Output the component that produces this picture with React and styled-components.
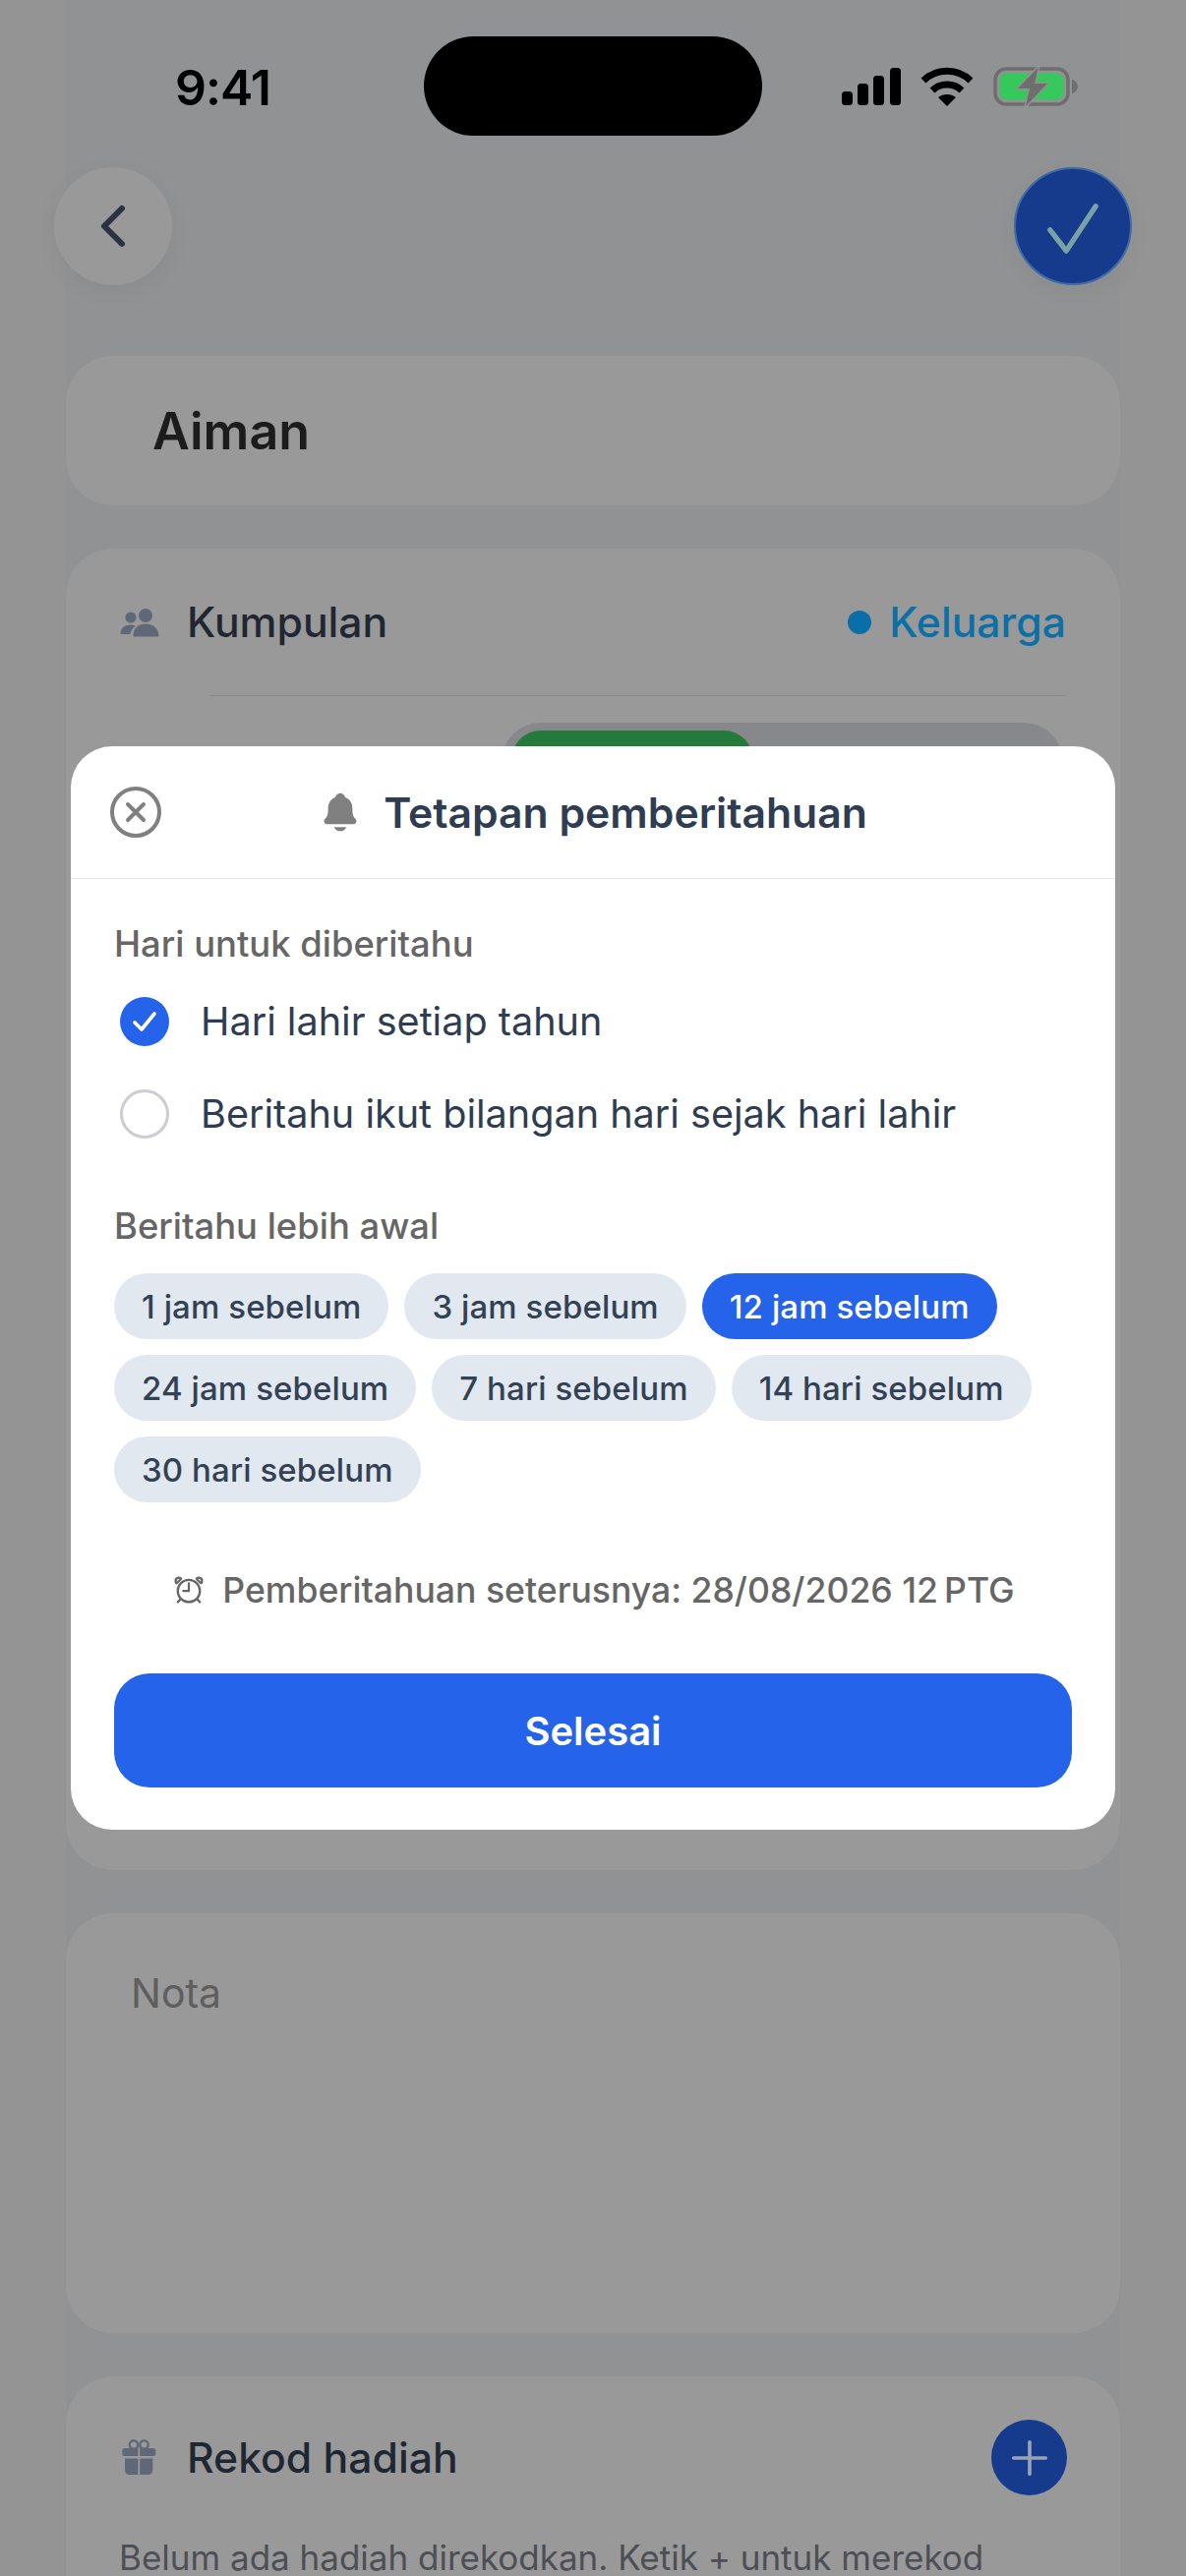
import styled, { createGlobalStyle } from "styled-components";
import {
  IoAdd,
  IoAlarmOutline,
  IoChevronBack,
  IoCloseCircleOutline,
  IoNotifications,
} from "react-icons/io5";

const CHIPS = [
  "1 jam sebelum",
  "3 jam sebelum",
  "12 jam sebelum",
  "24 jam sebelum",
  "7 hari sebelum",
  "14 hari sebelum",
  "30 hari sebelum",
];

const App = () => {
  return (
    <>
      <GlobalStyle />
      <Screen>
        <StatusBar>
          <Time>9:41</Time>
          <Island />
          <StatusIcons>
            <SignalIcon />
            <WifiIcon />
            <BatteryIcon />
          </StatusIcons>
        </StatusBar>

        <TopBar>
          <RoundButton>
            <IoChevronBack size={64} color="#2a3242" />
          </RoundButton>
          <RoundButton $primary>
            <svg width="120" height="120" viewBox="0 0 120 120" fill="none">
              <path
                d="M36 64 L53 86 L84 39"
                stroke="#79a1a6"
                strokeWidth="5.5"
                strokeLinecap="round"
                strokeLinejoin="round"
              />
            </svg>
          </RoundButton>
        </TopBar>

        <Column>
          <NameCard>
            <NameText>Aiman</NameText>
          </NameCard>

          <GroupCard>
            <Row>
              <RowLabel>
                <IconSlot>
                  <PeopleIcon />
                </IconSlot>
                <RowTitle>Kumpulan</RowTitle>
              </RowLabel>
              <GroupValue>
                <GroupDot />
                Keluarga
              </GroupValue>
            </Row>
            <Divider />
            <Segmented>
              <SegmentActive />
            </Segmented>
          </GroupCard>

          <NoteCard>
            <NotePlaceholder>Nota</NotePlaceholder>
          </NoteCard>

          <GiftCard>
            <GiftHeader>
              <RowLabel>
                <IconSlot>
                  <GiftIcon />
                </IconSlot>
                <RowTitle>Rekod hadiah</RowTitle>
              </RowLabel>
              <AddButton>
                <IoAdd size={58} color="#9aa3b5" />
              </AddButton>
            </GiftHeader>
            <GiftEmpty>Belum ada hadiah direkodkan. Ketik + untuk merekod</GiftEmpty>
          </GiftCard>
        </Column>

        <Modal>
          <ModalHeader>
            <CloseButton>
              <IoCloseCircleOutline size={64} color="#808080" />
            </CloseButton>
            <ModalTitle>
              <IoNotifications size={44} color="#808080" />
              <span>Tetapan pemberitahuan</span>
            </ModalTitle>
          </ModalHeader>

          <ModalBody>
            <SectionLabel>Hari untuk diberitahu</SectionLabel>
            <Options>
              <Option>
                <Radio $checked>
                  <svg width="28" height="24" viewBox="0 0 28 24" fill="none">
                    <path
                      d="M4 13 L11 20 L24 4"
                      stroke="#fff"
                      strokeWidth="3.6"
                      strokeLinecap="round"
                      strokeLinejoin="round"
                    />
                  </svg>
                </Radio>
                Hari lahir setiap tahun
              </Option>
              <Option>
                <Radio />
                Beritahu ikut bilangan hari sejak hari lahir
              </Option>
            </Options>

            <SectionLabel $spaced>Beritahu lebih awal</SectionLabel>
            <Chips>
              {CHIPS.map((chip) => (
                <Chip key={chip} $active={chip === "12 jam sebelum"}>
                  {chip}
                </Chip>
              ))}
            </Chips>

            <NextReminder>
              <IoAlarmOutline size={36} color="#666" />
              Pemberitahuan seterusnya: 28/08/2026 12{"\u202f"}PTG
            </NextReminder>

            <DoneButton>Selesai</DoneButton>
          </ModalBody>
        </Modal>
      </Screen>
    </>
  );
};

export default App;

const SignalIcon = () => (
  <svg width="60" height="38" viewBox="0 0 60 38" fill="#000">
    <rect x="0" y="24" width="11" height="14" rx="3.5" />
    <rect x="16" y="16" width="11" height="22" rx="3.5" />
    <rect x="32" y="8" width="11" height="30" rx="3.5" />
    <rect x="49" y="0" width="11" height="38" rx="3.5" />
  </svg>
);

const WifiIcon = () => (
  <svg width="54" height="40" viewBox="0 0 54 40" fill="none">
    <path d="M3 14 C16 1 38 1 51 14" stroke="#000" strokeWidth="7" />
    <path d="M12 24 C20 16 34 16 42 24" stroke="#000" strokeWidth="7" />
    <path d="M18 31 C23 27 31 27 36 31 L27 40 Z" fill="#000" />
  </svg>
);

const BatteryIcon = () => (
  <svg width="86" height="42" viewBox="0 0 86 42" fill="none">
    <rect x="2" y="3" width="74" height="36" rx="11" stroke="#6e6e6e" strokeWidth="3.5" />
    <rect x="6.5" y="7.5" width="65" height="27" rx="7" fill="#34c95a" />
    <path d="M80 14 C84 15 86 18 86 21 C86 24 84 27 80 28 Z" fill="#6e6e6e" />
    <path
      d="M46 1 L25 23 L37 23 L33 41 L55 18 L42 18 Z"
      fill="#6e6e6e"
      stroke="#929294"
      strokeWidth="3"
      strokeLinejoin="round"
      paintOrder="stroke"
    />
  </svg>
);

const PeopleIcon = () => (
  <svg width="40" height="32" viewBox="0 0 40 32" fill="#5f6878">
    <circle cx="26" cy="9" r="7" />
    <path d="M13.5 29 C13.5 22 19 17.5 26 17.5 C33 17.5 39 22 39.5 29 C39.5 30 39 30.5 38 30.5 L15 30.5 C14 30.5 13.5 30 13.5 29 Z" />
    <circle cx="11" cy="11" r="5.6" />
    <path d="M0.5 26.5 C1 21.5 5 18.5 10.5 18.5 C12.5 18.5 14.5 19 16 19.5 C13 21.5 11 24.5 10.5 28 L2 28 C1 28 0.5 27.5 0.5 26.5 Z" />
  </svg>
);

const GiftIcon = () => (
  <svg width="40" height="40" viewBox="0 0 40 40" fill="#5f6878">
    <circle cx="14" cy="6.5" r="4.2" fill="none" stroke="#5f6878" strokeWidth="2.4" />
    <circle cx="24.5" cy="6.5" r="4.2" fill="none" stroke="#5f6878" strokeWidth="2.4" />
    <path d="M5 10 H18.4 V18 H5 C3.4 18 2.3 16.9 2.3 15.4 V12.6 C2.3 11.1 3.4 10 5 10 Z" />
    <path d="M20.2 10 H33.6 C35.2 10 36.3 11.1 36.3 12.6 V15.4 C36.3 16.9 35.2 18 33.6 18 H20.2 Z" />
    <path d="M5 20.5 H18.4 V37 H10 C7 37 5 35 5 32 Z" />
    <path d="M20.2 20.5 H33.3 V32 C33.3 35 31.3 37 28.3 37 H20.2 Z" />
  </svg>
);

const GlobalStyle = createGlobalStyle`
  html, body {
    margin: 0;
    padding: 0;
    background: #949495;
    font-family: Inter, "Liberation Sans", sans-serif;
  }
  * {
    box-sizing: border-box;
  }
`;

const Screen = styled.div`
  position: relative;
  width: 1206px;
  height: 2620px;
  overflow: hidden;
  background: linear-gradient(
    to right,
    #949495 67px,
    #919293 67px,
    #919293 1139px,
    #949495 1139px
  );
`;

const StatusBar = styled.div`
  display: grid;
  grid-template-columns: 431px 344px 1fr;
  align-items: center;
  padding-top: 37px;
`;

const Time = styled.div`
  padding-left: 178px;
  padding-top: 2px;
  font-size: 50px;
  font-weight: 600;
  letter-spacing: -1px;
  color: #000;
`;

const Island = styled.div`
  height: 101px;
  border-radius: 51px;
  background: #000;
`;

const StatusIcons = styled.div`
  display: flex;
  align-items: center;
  gap: 20px;
  padding-left: 81px;
`;

const TopBar = styled.div`
  display: flex;
  justify-content: space-between;
  margin-top: 32px;
  padding: 0 55px;
`;

const RoundButton = styled.div`
  display: flex;
  align-items: center;
  justify-content: center;
  width: 120px;
  height: 120px;
  border-radius: 50%;
  background: ${(props) => (props.$primary ? "#163b8d" : "#999999")};
  border: ${(props) => (props.$primary ? "2px solid #3f6aa8" : "none")};
  box-shadow: 0 6px 24px rgba(0, 0, 0, 0.05);
`;

const Column = styled.div`
  display: flex;
  flex-direction: column;
  gap: 44px;
  margin: 0 67px;
  padding-top: 72px;
`;

const Card = styled.div`
  flex-shrink: 0;
  border-radius: 48px;
  background: #999999;
`;

const NameCard = styled(Card)`
  display: flex;
  align-items: center;
  height: 152px;
  padding-left: 88px;
`;

const NameText = styled.div`
  font-size: 52px;
  font-weight: 600;
  color: #1c1c1c;
`;

const GroupCard = styled(Card)`
  display: flex;
  flex-direction: column;
  height: 1344px;
  padding: 0 55px;
`;

const Row = styled.div`
  display: flex;
  align-items: center;
  justify-content: space-between;
  height: 149px;
`;

const RowLabel = styled.div`
  display: flex;
  align-items: center;
`;

const IconSlot = styled.div`
  display: flex;
  align-items: center;
  justify-content: center;
  width: 40px;
  height: 40px;
  margin-right: 28px;
`;

const RowTitle = styled.div`
  font-size: 42.7px;
  font-weight: 500;
  color: #1f2733;
`;

const GroupValue = styled.div`
  display: flex;
  align-items: center;
  gap: 18px;
  font-size: 42.7px;
  font-weight: 500;
  color: #0c6fa5;
`;

const GroupDot = styled.span`
  width: 24px;
  height: 24px;
  border-radius: 50%;
  background: #0a6fa8;
`;

const Divider = styled.div`
  height: 1px;
  margin-left: 91px;
  background: #8a8a8a;
`;

const Segmented = styled.div`
  width: 571px;
  height: 100px;
  margin-top: 27px;
  margin-left: 388px;
  padding: 8px 9.5px;
  border-radius: 40px;
  background: #87888c;
`;

const SegmentActive = styled.div`
  width: 246px;
  height: 84px;
  border-radius: 30px;
  background: #237a3b;
`;

const NoteCard = styled(Card)`
  height: 427px;
  padding: 60px 66px;
`;

const NotePlaceholder = styled.div`
  font-size: 41px;
  line-height: 42px;
  color: #5e5e5e;
`;

const GiftCard = styled(Card)`
  height: 400px;
  padding: 44px 54px 0 54px;
`;

const GiftHeader = styled.div`
  display: flex;
  align-items: center;
  justify-content: space-between;
  padding-left: 1px;
`;

const AddButton = styled.div`
  display: flex;
  align-items: center;
  justify-content: center;
  width: 77px;
  height: 77px;
  border-radius: 50%;
  background: #163b8d;
`;

const GiftEmpty = styled.div`
  margin-top: 45px;
  font-size: 35px;
  line-height: 36px;
  color: #4c4f55;
  white-space: nowrap;
`;

const Modal = styled.div`
  position: absolute;
  top: 759px;
  left: 72px;
  width: 1062px;
  height: 1102px;
  border-radius: 42px;
  background: #fff;
  overflow: hidden;
`;

const ModalHeader = styled.div`
  display: grid;
  grid-template-columns: 1fr auto 1fr;
  align-items: center;
  height: 135px;
  padding: 0 34px;
  border-bottom: 1px solid #e8e8ea;
`;

const CloseButton = styled.div`
  display: flex;
`;

const ModalTitle = styled.div`
  display: flex;
  align-items: center;
  gap: 22px;
  font-size: 42.7px;
  font-weight: 600;
  color: #2f3d52;
`;

const ModalBody = styled.div`
  padding: 45px 44px 0;
`;

const SectionLabel = styled.div`
  margin-top: ${(props) => (props.$spaced ? "68px" : "0")};
  font-size: 36.4px;
  line-height: 42px;
  font-weight: 500;
  color: #666666;
`;

const Options = styled.div`
  display: flex;
  flex-direction: column;
  gap: 44px;
  margin-top: 33px;
`;

const Option = styled.div`
  display: flex;
  align-items: center;
  gap: 32px;
  height: 50px;
  padding-left: 6px;
  font-size: 39.6px;
  color: #2f3d52;
`;

const Radio = styled.div`
  display: flex;
  align-items: center;
  justify-content: center;
  flex-shrink: 0;
  width: 50px;
  height: 50px;
  border-radius: 50%;
  background: ${(props) => (props.$checked ? "#2563eb" : "#fff")};
  border: ${(props) => (props.$checked ? "none" : "3px solid #cbcdd2")};
`;

const Chips = styled.div`
  display: flex;
  flex-wrap: wrap;
  gap: 16px;
  margin-top: 27px;
`;

const Chip = styled.div`
  display: flex;
  align-items: center;
  height: 67px;
  padding: 0 28px;
  border-radius: 34px;
  font-size: 33px;
  font-weight: 500;
  letter-spacing: 0.1px;
  white-space: nowrap;
  background: ${(props) => (props.$active ? "#2563eb" : "#e2e8f0")};
  color: ${(props) => (props.$active ? "#fff" : "#334155")};
`;

const NextReminder = styled.div`
  display: flex;
  align-items: center;
  justify-content: center;
  gap: 16px;
  height: 42px;
  margin-top: 68px;
  font-size: 35.6px;
  font-weight: 500;
  color: #666666;
`;

const DoneButton = styled.div`
  display: flex;
  align-items: center;
  justify-content: center;
  height: 116px;
  margin-top: 64px;
  border-radius: 36px;
  background: #2563eb;
  font-size: 40px;
  font-weight: 600;
  color: #fff;
`;
